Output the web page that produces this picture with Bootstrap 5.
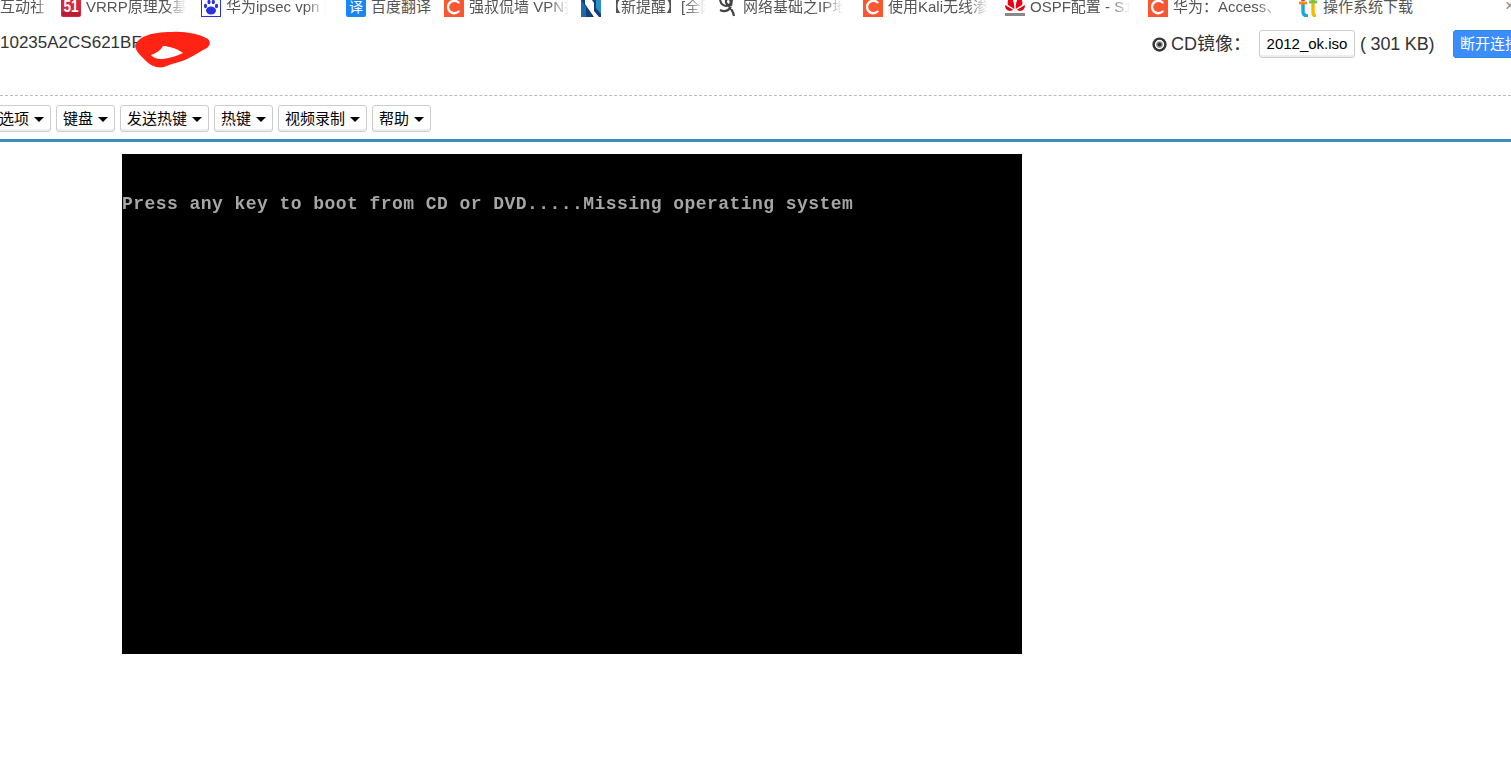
<!DOCTYPE html>
<html lang="zh">
<head>
<meta charset="utf-8">
<title>KVM</title>
<link href="https://cdn.jsdelivr.net/npm/bootstrap@5.3.0/dist/css/bootstrap.min.css" rel="stylesheet">
<script src="https://cdn.jsdelivr.net/npm/bootstrap@5.3.0/dist/js/bootstrap.bundle.min.js"></script>
<style>
html,body{height:100%;overflow:hidden;background:#fff}
body{font-family:"Liberation Sans","Noto Sans CJK SC",sans-serif;color:#333}
.favbar{height:17px;overflow:hidden;font-size:15px;line-height:16px;color:#555;position:relative}
.fav{flex:none;display:flex;gap:5px;overflow:hidden;white-space:nowrap;margin-top:-3px;height:20px;align-items:center}
.fav svg{flex:none;width:20px;height:20px}
.fav-label{display:block;width:100px;overflow:hidden;-webkit-mask-image:linear-gradient(to right,#000 80%,transparent 100%);mask-image:linear-gradient(to right,#000 80%,transparent 100%)}
.w0{width:61px}.w0 .fav-label{width:47px}
.w1{width:140px}.w2{width:145px}.w3{width:98px}.w4{width:137px}.w5{width:137px}.w6{width:145px}.w7{width:142px}.w8{width:143px}.w9{width:150px}
.w3 .fav-label{width:70px;mask-image:none;-webkit-mask-image:none}
.w9 .fav-label{width:105px}
.w10 .fav-label{width:120px;mask-image:none;-webkit-mask-image:none}
.fav-close{position:absolute;right:-4px;top:-2px;color:#888;font-size:17px}
.topline{height:79px;border-bottom:1px dashed #bbb;padding-top:13px;position:relative;white-space:nowrap;align-items:flex-start}
.serial{flex:none;width:1152px;font-size:17px;line-height:24px;margin-top:1px}
.scribble{position:absolute;left:134px;top:14px;width:77px;height:40px}
.mediabar{flex:none;display:flex;align-items:center;height:28px;font-size:18px}
.disc{width:15px;height:15px;margin-right:4px;flex:none}
.btn.file-btn,.btn.menu-btn{background:#fff;border:1px solid #ccc;border-radius:3px;color:#000;font-size:15px;line-height:20px;padding:3px 6px;height:28px;box-shadow:inset 0 -2px 0 #eee;white-space:nowrap;flex:none}
.btn.menu-btn{height:27px;padding:2px 6px}
.btn.menu-btn::after{border-top-width:5px;border-left-width:5px;border-right-width:5px;border-bottom-width:0;margin-left:5px;vertical-align:2px}
.btn.file-btn{width:96px;padding:3px 0;margin-right:5px}
.file-label{width:88px;flex:none}
.sizeinfo{width:93px;flex:none;letter-spacing:-.2px}
.btn.connect{background:#3b8cff;border:1px solid #2a8bd6;color:#fff;border-radius:3px;font-size:15px;line-height:20px;padding:3px 6px;height:28px;flex:none;width:76px;text-align:left;white-space:nowrap}
.toolbar{height:46px;border-bottom:3px solid #3c8dbc;padding-top:9px;gap:5px;margin-left:-8px}
.screen-wrap{padding:12px 0 0 122px}
.kvm-screen{width:900px;height:500px;background:#000;padding-top:40px}
.kvm-line{color:#a6a6a6;font-family:"Liberation Mono","DejaVu Sans Mono",monospace;font-weight:700;font-size:18px;letter-spacing:.45px;line-height:20px;white-space:pre;margin:0;filter:blur(.35px)}
</style>
</head>
<body>
<div class="favbar d-flex">
  <div class="fav w0"><span class="fav-label">互动社区</span></div>
  <div class="fav w1"><svg viewBox="0 0 20 20"><rect width="20" height="20" rx="2" fill="#d5283f"/><rect x="1" y="15" width="18" height="4" fill="#b81e33"/><text x="10" y="15" font-size="16" font-weight="700" fill="#fff" text-anchor="middle" textLength="15" lengthAdjust="spacingAndGlyphs" font-family="Liberation Sans">51</text></svg><span class="fav-label">VRRP原理及基础配置</span></div>
  <div class="fav w2"><svg viewBox="0 0 20 20"><rect x=".5" y=".5" width="19" height="19" fill="#fff" stroke="#2932e1"/><ellipse cx="10" cy="13.5" rx="5" ry="4" fill="#2932e1"/><ellipse cx="4.5" cy="9" rx="1.6" ry="2.2" fill="#2932e1"/><ellipse cx="8" cy="5" rx="1.6" ry="2.2" fill="#2932e1"/><ellipse cx="12.3" cy="5" rx="1.6" ry="2.2" fill="#2932e1"/><ellipse cx="15.5" cy="9" rx="1.6" ry="2.2" fill="#2932e1"/></svg><span class="fav-label">华为ipsec vpn 配置</span></div>
  <div class="fav w3"><svg viewBox="0 0 20 20"><rect width="20" height="20" rx="2" fill="#1787f5"/><text x="10" y="15" font-size="14" fill="#fff" text-anchor="middle" font-family="Noto Sans CJK SC">译</text></svg><span class="fav-label">百度翻译</span></div>
  <div class="fav w4"><svg viewBox="0 0 20 20"><rect width="20" height="20" fill="#fc5531"/><path d="M14.5 5.5A6.2 6.2 0 1 0 14.5 14.5" fill="none" stroke="#fff" stroke-width="2.4" stroke-linecap="round"/></svg><span class="fav-label">强叔侃墙 VPN技术</span></div>
  <div class="fav w5"><svg viewBox="0 0 20 20"><rect width="20" height="20" fill="#123f7c"/><path d="M4 0H9L13 6V14L18 20H13L4 7Z" fill="#fff"/><path d="M13 0H20V17L15 11V4Z" fill="#2a8fc4"/><path d="M0 3L5 10V20H0Z" fill="#1c6aa8"/></svg><span class="fav-label">【新提醒】[全网首发]</span></div>
  <div class="fav w6"><svg viewBox="0 0 20 20"><path d="M2 3C3 8 7 10 11 8C14 6 13 2 10 2C8 2 7 5 9 7C12 10 15 13 16 19M14 2L13 9M13 10C10 14 6 15 2 13" fill="none" stroke="#444" stroke-width="2.2"/></svg><span class="fav-label">网络基础之IP地址</span></div>
  <div class="fav w7"><svg viewBox="0 0 20 20"><rect width="20" height="20" fill="#fc5531"/><path d="M14.5 5.5A6.2 6.2 0 1 0 14.5 14.5" fill="none" stroke="#fff" stroke-width="2.4" stroke-linecap="round"/></svg><span class="fav-label">使用Kali无线渗透</span></div>
  <div class="fav w8"><svg viewBox="0 0 20 20"><g fill="#e60012"><path d="M9.3 12 3 8C2 5 3 2 6 0 8 2 9.5 7 9.3 12Z"/><path d="M10.7 12 17 8C18 5 17 2 14 0 12 2 10.5 7 10.7 12Z"/><path d="M8.5 13 0 8C0 11 2 14 5 14Z"/><path d="M11.5 13 20 8C20 11 18 14 15 14Z"/></g><rect x="0" y="16" width="20" height="3" fill="#888"/></svg><span class="fav-label">OSPF配置 - S1720</span></div>
  <div class="fav w9"><svg viewBox="0 0 20 20"><rect width="20" height="20" fill="#fc5531"/><path d="M14.5 5.5A6.2 6.2 0 1 0 14.5 14.5" fill="none" stroke="#fff" stroke-width="2.4" stroke-linecap="round"/></svg><span class="fav-label">华为：Access、Trunk</span></div>
  <div class="fav w10"><svg viewBox="0 0 20 20"><path d="M5 5V14Q5 19 10 19" fill="none" stroke="#1aa5e0" stroke-width="3.4"/><path d="M15 5V15Q15 19 18 19" fill="none" stroke="#f5b800" stroke-width="3.4"/><path d="M1 6H9" stroke="#f08a1d" stroke-width="2.8"/><path d="M11 5H19" stroke="#7cc242" stroke-width="2.8"/><circle cx="5" cy="2" r="2.4" fill="#e8432e"/><circle cx="15" cy="2" r="2.4" fill="#7cc242"/></svg><span class="fav-label">操作系统下载</span></div>
  <span class="fav-close">×</span>
</div>
<div class="topline d-flex">
  <div class="serial">10235A2CS621BF</div>
  <svg class="scribble" viewBox="0 0 77 40"><path fill-rule="evenodd" fill="#ff2314" d="M1 15C4 6 16 1 38 1C50 0 66 3 74 8C77 11 76 14 73 17C66 20 62 24 55 27C49 31 38 32 30 36C22 38 14 33 9 27C5 23 2 20 1 15ZM17 24C22 31 36 28 49 22C42 17 34 15 29 15C26 20 22 22 17 24Z"/></svg>
  <div class="mediabar">
    <svg class="disc" viewBox="0 0 16 16"><circle cx="8" cy="8" r="6.3" fill="none" stroke="#333" stroke-width="2.6"/><circle cx="8" cy="8" r="3.6" fill="#999"/><circle cx="8" cy="8" r="2.2" fill="#333"/></svg>
    <span class="file-label">CD镜像：</span>
    <button class="btn file-btn" type="button">2012_ok.iso</button>
    <span class="sizeinfo">( 301 KB)</span>
    <button class="btn btn-primary connect" type="button">断开连接</button>
  </div>
</div>
<div class="toolbar d-flex align-items-start">
  <button class="btn dropdown-toggle menu-btn" type="button">选项</button>
  <button class="btn dropdown-toggle menu-btn" type="button">键盘</button>
  <button class="btn dropdown-toggle menu-btn" type="button">发送热键</button>
  <button class="btn dropdown-toggle menu-btn" type="button">热键</button>
  <button class="btn dropdown-toggle menu-btn" type="button">视频录制</button>
  <button class="btn dropdown-toggle menu-btn" type="button">帮助</button>
</div>
<div class="screen-wrap">
  <div class="kvm-screen"><p class="kvm-line">Press any key to boot from CD or DVD.....Missing operating system</p></div>
</div>
</body>
</html>
